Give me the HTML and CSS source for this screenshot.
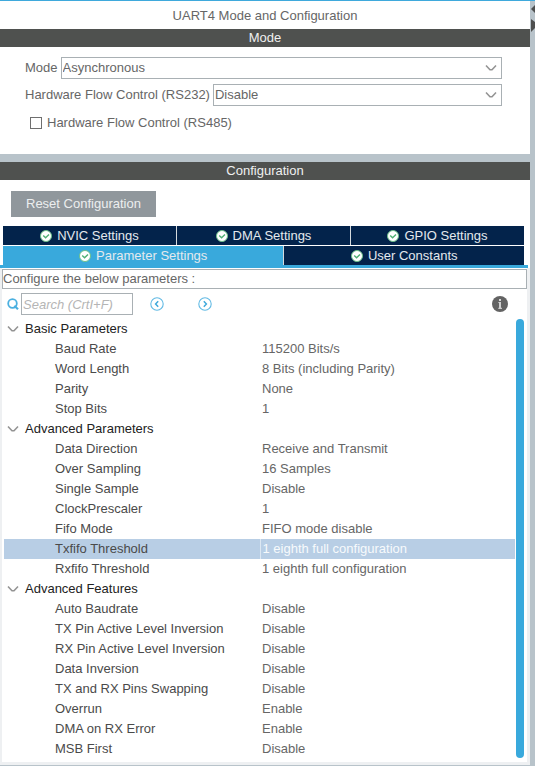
FILE: index.html
```
<!DOCTYPE html>
<html lang="en">
<head>
  <meta charset="UTF-8">
  <title>UART4 Mode and Configuration</title>
  <meta name="viewport" content="width=device-width, initial-scale=1.0">
  <link rel="stylesheet" href="styles.css">
</head>
<body>
  <svg class="defs" aria-hidden="true">
    <symbol id="check" viewBox="0 0 12 12">
      <circle cx="6" cy="6" r="5.5" fill="#fff" stroke="#6cc08a" stroke-width="1"/>
      <path d="M3.2 5.4 L5.6 7.7 L9 4.4" fill="none" stroke="#4fb074" stroke-width="1.4"/>
    </symbol>
    <symbol id="chevron" viewBox="0 0 12 8">
      <path d="M1 1.5 L5 5.8 L7 5.8 L11 1.5" fill="none" stroke="#949494" stroke-width="1.6"/>
    </symbol>
  </svg>

  <div class="page">
    <main class="panels">
      <section class="mode">
        <h1>UART4 Mode and Configuration</h1>
        <h2>Mode</h2>
        <form class="mode-form">
          <div class="field">
            <label for="mode">Mode</label>
            <span class="select">
              <select id="mode">
                <option>Asynchronous</option>
              </select>
              <svg class="chevron"><use href="#chevron"/></svg>
            </span>
          </div>
          <div class="field">
            <label for="rs232">Hardware Flow Control (RS232)</label>
            <span class="select">
              <select id="rs232">
                <option>Disable</option>
              </select>
              <svg class="chevron"><use href="#chevron"/></svg>
            </span>
          </div>
          <div class="check-field">
            <input type="checkbox" id="rs485">
            <label for="rs485">Hardware Flow Control (RS485)</label>
          </div>
        </form>
      </section>

      <section class="config">
        <h2>Configuration</h2>
        <button class="reset">Reset Configuration</button>

        <div class="tabs">
          <div class="tab-row">
            <button class="tab"><svg><use href="#check"/></svg>NVIC Settings</button>
            <button class="tab"><svg><use href="#check"/></svg>DMA Settings</button>
            <button class="tab"><svg><use href="#check"/></svg>GPIO Settings</button>
          </div>
          <div class="tab-row">
            <button class="tab active"><svg><use href="#check"/></svg>Parameter Settings</button>
            <button class="tab last"><svg><use href="#check"/></svg>User Constants</button>
          </div>
        </div>

        <div class="tab-body">
          <p class="hint">Configure the below parameters :</p>

          <div class="search">
            <label for="search" aria-label="Search">
              <svg class="glass" viewBox="0 0 12 12">
                <circle cx="5.5" cy="5.5" r="4.3" fill="none" stroke="#4bb0e0" stroke-width="1.8"/>
                <path d="M7.4 7.8 L11 11.2" stroke="#4bb0e0" stroke-width="2.2"/>
              </svg>
            </label>
            <input type="text" id="search" placeholder="Search (CrtI+F)">
            <button class="round" aria-label="Previous">
              <svg viewBox="0 0 14 14">
                <circle cx="7" cy="7" r="6.2" fill="none" stroke="#62bae4" stroke-width="1.1"/>
                <path d="M8.2 4.2 L5.6 7 L8.2 9.8" fill="none" stroke="#3fa9dc" stroke-width="1.5"/>
              </svg>
            </button>
            <button class="round" aria-label="Next">
              <svg viewBox="0 0 14 14">
                <circle cx="7" cy="7" r="6.2" fill="none" stroke="#62bae4" stroke-width="1.1"/>
                <path d="M5.8 4.2 L8.4 7 L5.8 9.8" fill="none" stroke="#3fa9dc" stroke-width="1.5"/>
              </svg>
            </button>
            <button class="info" aria-label="Info">
              <svg viewBox="0 0 16 16">
                <circle cx="8" cy="8" r="8" fill="#636363"/>
                <path d="M6.3 6.5 H9 M6.3 12.3 H10" fill="none" stroke="#c8c8c8" stroke-width="1.2"/>
                <path d="M8 6 V12.5" stroke="#d0d0d0" stroke-width="2"/>
                <rect x="7" y="3" width="2" height="2" fill="#d8d8d8"/>
              </svg>
            </button>
          </div>

          <div class="tree">
            <table>
              <tbody>
                <tr class="group"><th colspan="2"><button><svg class="chevron"><use href="#chevron"/></svg>Basic Parameters</button></th></tr>
                <tr><td>Baud Rate</td><td>115200 Bits/s</td></tr>
                <tr><td>Word Length</td><td>8 Bits (including Parity)</td></tr>
                <tr><td>Parity</td><td>None</td></tr>
                <tr><td>Stop Bits</td><td>1</td></tr>
              </tbody>
              <tbody>
                <tr class="group"><th colspan="2"><button><svg class="chevron"><use href="#chevron"/></svg>Advanced Parameters</button></th></tr>
                <tr><td>Data Direction</td><td>Receive and Transmit</td></tr>
                <tr><td>Over Sampling</td><td>16 Samples</td></tr>
                <tr><td>Single Sample</td><td>Disable</td></tr>
                <tr><td>ClockPrescaler</td><td>1</td></tr>
                <tr><td>Fifo Mode</td><td>FIFO mode disable</td></tr>
                <tr class="selected"><td>Txfifo Threshold</td><td>1 eighth full configuration</td></tr>
                <tr><td>Rxfifo Threshold</td><td>1 eighth full configuration</td></tr>
              </tbody>
              <tbody>
                <tr class="group"><th colspan="2"><button><svg class="chevron"><use href="#chevron"/></svg>Advanced Features</button></th></tr>
                <tr><td>Auto Baudrate</td><td>Disable</td></tr>
                <tr><td>TX Pin Active Level Inversion</td><td>Disable</td></tr>
                <tr><td>RX Pin Active Level Inversion</td><td>Disable</td></tr>
                <tr><td>Data Inversion</td><td>Disable</td></tr>
                <tr><td>TX and RX Pins Swapping</td><td>Disable</td></tr>
                <tr><td>Overrun</td><td>Enable</td></tr>
                <tr><td>DMA on RX Error</td><td>Enable</td></tr>
                <tr><td>MSB First</td><td>Disable</td></tr>
              </tbody>
            </table>
            <div class="scrollbar"></div>
          </div>
        </div>
      </section>
    </main>

    <div class="splitter">
      <svg viewBox="0 0 5 32">
        <path d="M5 4 L1 8 L5 12 Z M1 18 L5 21 V27 L1 31 Z" fill="#4d4f4f"/>
      </svg>
    </div>
  </div>
</body>
</html>
```
FILE: styles.css
```
* {
  box-sizing: border-box;
}

body {
  margin: 0;
  background: #b8c3ca;
  font-family: "Liberation Sans", Arial, sans-serif;
  font-size: 13px;
  line-height: 20px;
  color: #666;
}

button, input, select {
  font: inherit;
  color: inherit;
}

button {
  border: none;
  padding: 0;
  background: none;
  cursor: pointer;
}

.defs {
  position: absolute;
  width: 0;
  height: 0;
}

.page {
  display: flex;
  border-top: 1px solid #3fa9dc;
  padding-bottom: 2px;
}

.panels {
  flex: 1;
  display: flex;
  flex-direction: column;
  gap: 8px;
}

.splitter {
  width: 5px;
}

.splitter svg {
  display: block;
  width: 5px;
  height: 32px;
}

.mode, .config {
  background: #fff;
}

h1, h2 {
  margin: 0;
  font-size: 13px;
  font-weight: normal;
  text-align: center;
}

h1 {
  padding: 5px 0 3px;
}

h2 {
  background: #4f514f;
  color: #f0f0f0;
  line-height: 18px;
}

/* Mode */

.mode-form {
  display: flex;
  flex-direction: column;
  gap: 5px;
  padding: 10px 28px 19px 25px;
}

.field {
  display: flex;
  align-items: center;
  gap: 3px;
}

.select {
  flex: 1;
  display: grid;
  align-items: center;
}

.select select, .select .chevron {
  grid-area: 1 / 1;
}

.select select {
  appearance: none;
  width: 100%;
  height: 22px;
  padding: 0 24px 0 1px;
  border: 1px solid #a9b0b4;
  border-radius: 0;
  background: #fff;
}

.select .chevron {
  justify-self: end;
  margin-right: 5px;
  pointer-events: none;
}

.chevron {
  width: 12px;
  height: 8px;
}

.check-field {
  display: flex;
  align-items: center;
  gap: 5px;
  padding: 2px 5px;
}

.check-field input {
  appearance: none;
  width: 12px;
  height: 12px;
  margin: 0;
  border: 1px solid #6f6f6f;
  background: #fff;
}

.check-field input:checked {
  background: #3fa9dc;
}

/* Configuration */

.reset {
  display: block;
  margin: 11px 0 9px 11px;
  padding: 3px 15px;
  background: #90979c;
  color: #eceeef;
}

.tabs {
  display: flex;
  flex-direction: column;
  gap: 1px;
  margin-right: 2px;
  padding: 0 4px 0 3px;
  border-bottom: 3px solid #39a9dc;
}

.tab-row {
  display: flex;
  gap: 1px;
  background: #d5dade;
}

.tab {
  flex: 1;
  display: flex;
  align-items: center;
  justify-content: center;
  gap: 5px;
  height: 19px;
  background: #03234b;
  color: #e4e9ee;
}

.tab svg {
  width: 12px;
  height: 12px;
}

.tab.active {
  flex: 281;
  background: #39a9dc;
}

.tab.last {
  flex: 240;
}

.tab-body {
  padding: 1px 0 3px;
  border: solid #eef0f2;
  border-width: 0 3px 3px 2px;
}

.hint {
  margin: 0;
  border: 1px solid #a9b0b4;
  line-height: 18px;
}

.search {
  display: flex;
  align-items: center;
  padding: 4px 19px 4px 5px;
}

.glass {
  display: block;
  width: 12px;
  height: 12px;
}

.search input {
  width: 112px;
  height: 22px;
  margin: 0 17px 0 2px;
  padding: 0 1px;
  border: 1px solid #a9b0b4;
  border-radius: 0;
  font-style: italic;
}

.search input::placeholder {
  color: #b5b5b5;
}

.round {
  margin-right: 34px;
}

.round svg {
  display: block;
  width: 14px;
  height: 14px;
}

.info {
  margin-left: auto;
}

.info svg {
  display: block;
  width: 16px;
  height: 16px;
}

/* Parameter tree */

.tree {
  display: flex;
  gap: 1px;
  padding: 0 3px 0 2px;
}

table {
  flex: 1;
  border-collapse: collapse;
  table-layout: fixed;
}

th, td {
  height: 20px;
  padding: 0;
  font-weight: normal;
  text-align: left;
}

th button {
  display: flex;
  align-items: center;
  gap: 6px;
  margin-left: 3px;
  color: #222;
}

td:first-child {
  width: 256px;
  padding-left: 51px;
  color: #4a4a4a;
}

td:last-child {
  padding-left: 2px;
}

.selected td {
  background: #b8cee5;
}

.selected td:last-child {
  border-left: 1px solid #dce7f2;
  color: #f7fafc;
}

.scrollbar {
  width: 8px;
  margin-bottom: 1px;
  border-radius: 4px;
  background: #39a9dc;
}
```
